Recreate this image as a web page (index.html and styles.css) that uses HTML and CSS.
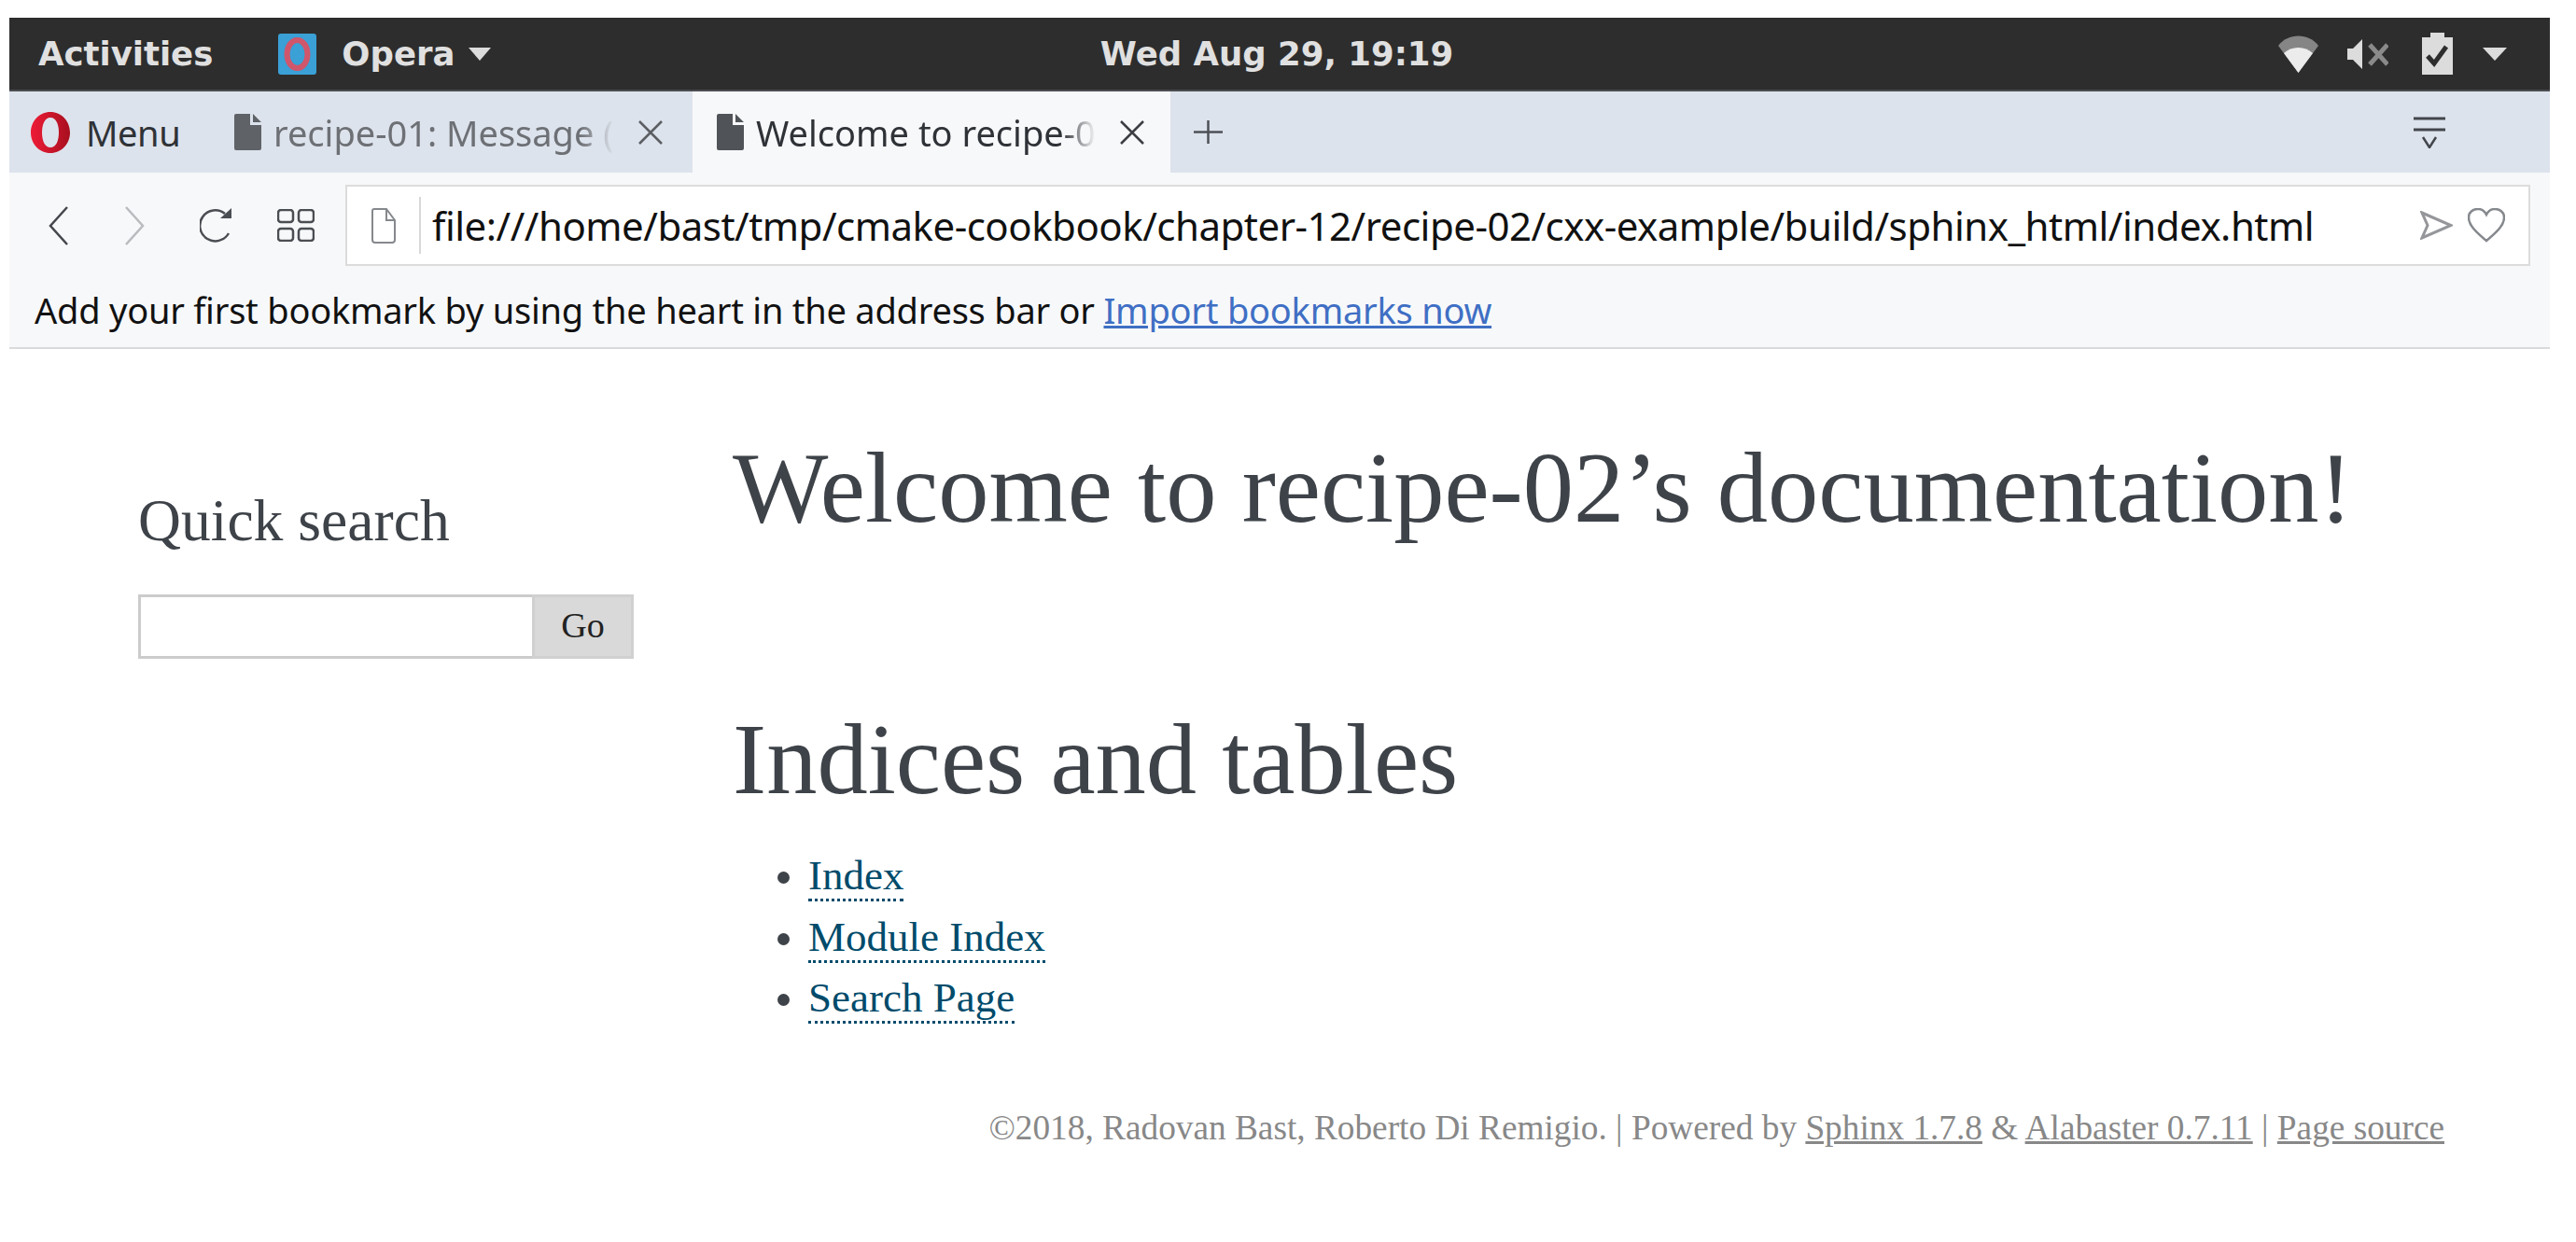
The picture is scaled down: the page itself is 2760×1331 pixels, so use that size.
FILE: index.html
```html
<!DOCTYPE html>
<html lang="en">
<head>
    <meta charset="UTF-8">
    <title>Welcome to recipe-02's documentation!</title>
    <link rel="stylesheet" href="styles.css">
</head>
<body>
    <header class="topbar">
        <div class="topbar-left">
            <span class="activities">Activities</span>
            <svg class="app-icon" width="41" height="44" viewBox="0 0 41 44">
                <rect width="41" height="44" rx="3" fill="#3aa0d6"/>
                <ellipse cx="20.500" cy="22" rx="11" ry="15" fill="none" stroke="#d0566c" stroke-width="6"/>
            </svg>
            <span class="app-name">Opera</span>
            <svg class="arrow" width="24" height="14" viewBox="0 0 24 14"><path d="M0 0H24L12 14Z" fill="#dcdcdc"/></svg>
        </div>
        <div class="clock">Wed Aug 29, 19:19</div>
        <div class="topbar-right">
            <svg width="43" height="40" viewBox="0 0 43 40">
                <path d="M0 11C10 -3 33 -3 43 11L21.500 40Z" fill="#858585"/>
                <path d="M6 19C14 11 29 11 37 19L21.500 40Z" fill="#ececec"/>
            </svg>
            <svg class="speaker" width="44" height="32" viewBox="0 0 44 32">
                <path d="M0 10H6L16 0V32L6 22H0Z" fill="#dcdcdc"/>
                <path d="M24 6L43 27M43 6L24 27" stroke="#8a8a8a" stroke-width="5" fill="none"/>
            </svg>
            <svg class="battery" width="33" height="45" viewBox="0 0 33 45">
                <path d="M9 0H24V5H33V45H0V5H9Z" fill="#dcdcdc"/>
                <path d="M6 25L13 33L26 15" stroke="#2d2d2d" stroke-width="5" fill="none"/>
            </svg>
            <svg class="arrow" width="26" height="14" viewBox="0 0 26 14"><path d="M0 0H26L13 14Z" fill="#dcdcdc"/></svg>
        </div>
    </header>

    <div class="tabstrip">
        <div class="menu-btn">
            <svg width="42" height="44" viewBox="0 0 42 44">
                <defs>
                    <linearGradient id="operaRed" x1="0" x2="1" y1="0" y2="0">
                        <stop offset="0" stop-color="#ee1c36"/>
                        <stop offset="1" stop-color="#a80f1f"/>
                    </linearGradient>
                </defs>
                <path fill-rule="evenodd" d="M21 0C33 0 42 10 42 22C42 34 33 44 21 44C9 44 0 34 0 22C0 10 9 0 21 0ZM21 6C15 6 12 13 12 22C12 31 15 38 21 38C27 38 30 31 30 22C30 13 27 6 21 6Z" fill="url(#operaRed)"/>
            </svg>
            <span>Menu</span>
        </div>
        <div class="tab">
            <svg class="doc" width="29" height="39" viewBox="0 0 29 39"><path d="M2 0H17V12H29V37Q29 39 27 39H2Q0 39 0 37V2Q0 0 2 0ZM20 0L29 9H20Z" fill="#5f6266"/></svg>
            <span class="tab-title">recipe-01: Message (</span>
            <svg class="close" width="26" height="26" viewBox="0 0 26 26"><path d="M1 1L25 25M25 1L1 25" stroke="#5b5e63" stroke-width="2.500"/></svg>
        </div>
        <div class="tab tab-active">
            <svg class="doc" width="29" height="39" viewBox="0 0 29 39"><path d="M2 0H17V12H29V37Q29 39 27 39H2Q0 39 0 37V2Q0 0 2 0ZM20 0L29 9H20Z" fill="#505357"/></svg>
            <span class="tab-title">Welcome to recipe-0</span>
            <svg class="close" width="26" height="26" viewBox="0 0 26 26"><path d="M1 1L25 25M25 1L1 25" stroke="#3b3e43" stroke-width="2.500"/></svg>
        </div>
        <svg class="plus" width="31" height="25" viewBox="0 0 31 25"><path d="M15.500 0V25M0 12.500H31" stroke="#4d5157" stroke-width="2.500"/></svg>
        <svg class="tabmenu" width="34" height="34" viewBox="0 0 34 34">
            <path d="M0 2H34M0 14H34" stroke="#42464c" stroke-width="3"/>
            <path d="M10 22L17 33L24 22" stroke="#42464c" stroke-width="2.500" fill="none"/>
        </svg>
    </div>

    <div class="toolbar">
        <svg class="nav-back" width="21" height="42" viewBox="0 0 21 42"><path d="M20 1L2 21L20 41" stroke="#44474c" stroke-width="2.500" fill="none"/></svg>
        <svg class="nav-forward" width="21" height="42" viewBox="0 0 21 42"><path d="M1 1L19 21L1 41" stroke="#b9bbbe" stroke-width="2.500" fill="none"/></svg>
        <svg class="nav-reload" width="36" height="37" viewBox="0 0 36 37">
            <path d="M31 27A16.500 16.500 0 1 1 27 6" stroke="#4a4d52" stroke-width="2.500" fill="none"/>
            <path d="M22 11H34V0Z" fill="#4a4d52"/>
        </svg>
        <svg class="nav-grid" width="40" height="35" viewBox="0 0 40 35">
            <rect x="1" y="1" width="16" height="13" rx="3" fill="none" stroke="#4a4d52" stroke-width="2.500"/>
            <rect x="23" y="1" width="16" height="13" rx="3" fill="none" stroke="#4a4d52" stroke-width="2.500"/>
            <rect x="1" y="21" width="16" height="13" rx="3" fill="none" stroke="#4a4d52" stroke-width="2.500"/>
            <rect x="23" y="21" width="16" height="13" rx="3" fill="none" stroke="#4a4d52" stroke-width="2.500"/>
        </svg>
        <div class="address">
            <svg class="page-icon" width="26" height="38" viewBox="0 0 26 38"><path d="M3 1H16L25 13V34Q25 37 22 37H4Q1 37 1 34V3Q1 1 3 1ZM16 1V13H25" stroke="#85888c" stroke-width="2" fill="none"/></svg>
            <span class="address-sep"></span>
            <span class="url">file:///home/bast/tmp/cmake-cookbook/chapter-12/recipe-02/cxx-example/build/sphinx_html/index.html</span>
            <svg class="send" width="35" height="31" viewBox="0 0 35 31"><path d="M2 2L33 15.500L2 29L8 15.500Z" stroke="#94969a" stroke-width="3" fill="none"/></svg>
            <svg class="heart" width="40" height="37" viewBox="0 0 40 37"><path d="M20 35C8 25 1 18 1 10C1 4 6 1 11 1C15 1 18 3 20 7C22 3 25 1 29 1C34 1 39 4 39 10C39 18 32 25 20 35Z" stroke="#85888c" stroke-width="2.500" fill="none"/></svg>
        </div>
    </div>

    <div class="bookmarks">Add your first bookmark by using the heart in the address bar or <a class="import-link" href="#">Import bookmarks now</a></div>

    <div class="page">
        <aside class="sidebar">
            <h3>Quick search</h3>
            <form class="search">
                <input class="search-input" type="text">
                <button class="search-btn" type="button">Go</button>
            </form>
        </aside>
        <main class="content">
            <h1>Welcome to recipe-02’s documentation!</h1>
            <h1 class="second">Indices and tables</h1>
            <ul>
                <li><a href="#">Index</a></li>
                <li><a href="#">Module Index</a></li>
                <li><a href="#">Search Page</a></li>
            </ul>
        </main>
    </div>
    <footer class="footer">©2018, Radovan Bast, Roberto Di Remigio. | Powered by <a href="#">Sphinx 1.7.8</a> &amp; <a href="#">Alabaster 0.7.11</a> | <a href="#">Page source</a></footer>
</body>
</html>
```

FILE: styles.css
```css
body {
    margin: 0;
    padding: 19px 28px 0 10px;
    background: #fff;
    font-family: "Liberation Serif", serif;
    color: #3e4349;
}

/* gnome top bar */
.topbar {
    height: 79px;
    background: #2d2d2d;
    border-bottom: 2px solid #4a4c50;
    box-sizing: border-box;
    display: grid;
    grid-template-columns: 1fr auto 1fr;
    align-items: center;
    color: #e0e0e0;
    font-family: "DejaVu Sans", sans-serif;
    font-weight: bold;
    font-size: 35.500px;
}
.topbar-left {
    display: flex;
    align-items: center;
    padding-left: 31px;
}
.activities {
    margin-right: 70px;
}
.app-name {
    margin: 0 15px 0 27px;
}
.clock {
    text-align: center;
    margin-right: 6px;
}
.topbar-right {
    display: flex;
    align-items: center;
    justify-content: flex-end;
    padding-right: 46px;
}
.speaker {
    margin: 0 36px 0 31px;
}
.battery {
    margin-right: 32px;
}

/* tabs */
.tabstrip {
    height: 87px;
    background: #dde3ec;
    display: flex;
    align-items: center;
    font-family: "Noto Sans", sans-serif;
    font-size: 38px;
    color: #2f3237;
}
.menu-btn {
    width: 241px;
    padding-left: 23px;
    box-sizing: border-box;
    display: flex;
    align-items: center;
    gap: 17px;
    letter-spacing: -0.400px;
}
.tab {
    height: 100%;
    display: flex;
    align-items: center;
    width: 491px;
    color: #6d7075;
    box-sizing: border-box;
    padding-right: 32px;
}
.tab-active {
    width: 512px;
    background: #f7f8fa;
    color: #2f3237;
    padding: 0 28px 0 26px;
}
.tab-title {
    margin-left: 13px;
    white-space: nowrap;
    -webkit-mask-image: linear-gradient(to right, #000 90%, transparent 100%);
    mask-image: linear-gradient(to right, #000 90%, transparent 100%);
}
.close {
    margin-left: auto;
    flex: none;
}
.plus {
    margin-left: 25px;
}
.tabmenu {
    margin-left: auto;
    margin-right: 112px;
}

/* address bar */
.toolbar {
    height: 113px;
    background: #f7f8fa;
    display: flex;
    align-items: center;
    box-sizing: border-box;
    padding: 0 21px 0 42px;
}
.nav-forward {
    margin-left: 61px;
}
.nav-reload {
    margin-left: 59px;
}
.nav-grid {
    margin-left: 47px;
}
.address {
    margin-left: 33px;
    flex: 1;
    height: 87px;
    background: #fff;
    border: 2px solid #dcdcdc;
    box-sizing: border-box;
    display: flex;
    align-items: center;
    padding-left: 26px;
}
.address-sep {
    width: 2px;
    height: 61px;
    background: #d8d8d8;
    margin: 0 12px 0 25px;
}
.url {
    font-family: "Noto Sans", sans-serif;
    font-size: 42px;
    letter-spacing: -0.500px;
    color: #111;
    white-space: nowrap;
}
.send {
    margin-left: auto;
}
.heart {
    margin: 0 25px 0 16px;
}

/* bookmarks notice */
.bookmarks {
    height: 76px;
    background: #f7f8fa;
    border-bottom: 2px solid #d9dadc;
    box-sizing: border-box;
    padding-left: 27px;
    font-family: "Noto Sans", sans-serif;
    font-size: 38px;
    letter-spacing: -0.230px;
    line-height: 68px;
    color: #111;
}
.import-link {
    color: #3f6fc4;
}

/* sphinx page */
.page {
    display: flex;
    padding-left: 138px;
}
.sidebar {
    width: 637px;
    flex: none;
    padding-top: 146px;
}
.sidebar h3 {
    margin: 0;
    font-weight: normal;
    font-size: 63.600px;
    line-height: 1.2;
}
.search {
    display: flex;
    margin-top: 41px;
    height: 69px;
}
.search-input {
    width: 422px;
    box-sizing: border-box;
    border: 3px solid #ccc;
    border-right: 0;
    background: #fff;
    margin: 0;
    padding: 0;
}
.search-btn {
    width: 109px;
    box-sizing: border-box;
    border: 3px solid #d0d0d0;
    background: #d9d9d9;
    font-family: "Liberation Serif", serif;
    font-size: 38px;
    color: #222;
    padding: 0 0 3px;
}
.content {
    padding-top: 78px;
}
h1 {
    margin: 0;
    font-weight: normal;
    font-size: 108.500px;
    line-height: 1.3;
}
.second {
    margin-top: 150px;
}
ul {
    margin: 22px 0 0;
    padding: 0 0 0 81px;
    font-size: 45px;
    line-height: 65.500px;
}
a {
    color: inherit;
}
.content a {
    color: #004b6b;
    text-decoration: none;
    border-bottom: 3px dotted #004b6b;
}
.footer {
    margin: 84px 113px 0 0;
    text-align: right;
    font-size: 37.300px;
    color: #888;
}
```
